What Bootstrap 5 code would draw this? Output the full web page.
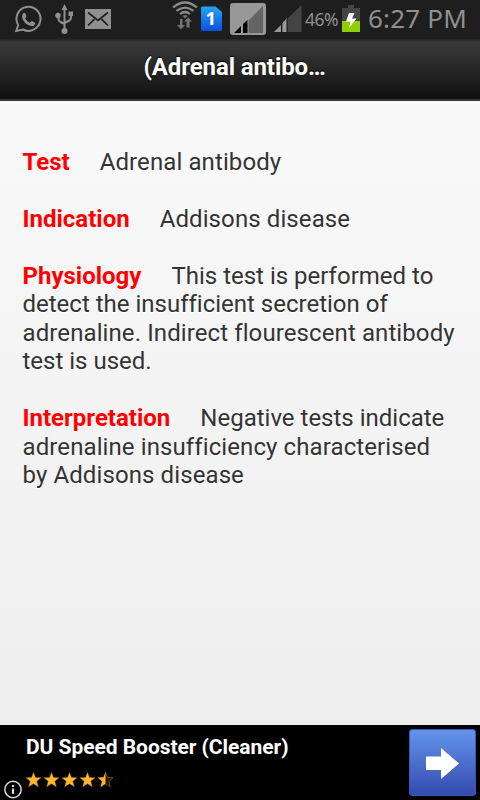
<!DOCTYPE html>
<html lang="en">
<head>
<meta charset="utf-8">
<meta name="viewport" content="width=device-width, initial-scale=1">
<title>Adrenal antibody</title>
<link href="https://cdn.jsdelivr.net/npm/bootstrap@5.3.0/dist/css/bootstrap.min.css" rel="stylesheet">
<style>
body{font-family:Roboto,"Noto Sans",sans-serif;height:800px;overflow:hidden;color:#333}
.status-bar{height:38px;background:#1e1e1e;color:#909090;font-family:"Noto Sans",sans-serif}
.status-bar svg,.ad-banner svg{display:block;flex:none}
.wa{margin-left:14px}.usb{margin-left:12px}.mail{margin-left:10px}
.wifi{margin-left:60px}.sim{margin-left:3px}.sig1{margin-left:6px}.sig2{margin-left:8px}
.pct{font-size:17.5px;letter-spacing:-.5px;width:33px;margin-left:3px;line-height:38px;white-space:nowrap}
.batt{margin-left:4px}
.clock{font-size:26px;letter-spacing:.2px;margin-left:8px;padding-bottom:2px;line-height:36px;white-space:nowrap}
.title-bar{height:63px;background:linear-gradient(#1c1c1c 0,#3a3a3a 4px,#111 60px);border-bottom:2px solid #373535;text-shadow:0 -1px 1px #000}
.title-bar h1{font-size:24px;line-height:28px;width:193px;letter-spacing:-.1px;margin-top:-3px;white-space:nowrap}
.article{height:624px;padding:46.8px 22.5px 0;background:linear-gradient(#f9f9f9,#eee);font-size:24px;line-height:28.5px;text-shadow:0 1px 0 #fff;font-variant-ligatures:none}
.article p{margin:0 0 28.5px;white-space:nowrap}
.article strong{color:#f00;margin-right:30px}
.loose{letter-spacing:.1px}
.ad-banner{height:75px;background:#000;color:#fff}
.ad-title{font-size:21px;line-height:24px;letter-spacing:-.05px;white-space:nowrap}
.ad-copy{padding:10px 0 0 12px;margin-left:-9px}
.info{margin:55px 0 0 3px}
.stars{margin-top:10px}
.go{width:67px;height:67px;margin:4px 4px 0 0;border:1px solid #3159c4;border-radius:3px;background:linear-gradient(#6494ea,#344ab0)}
</style>
<script src="https://cdn.jsdelivr.net/npm/bootstrap@5.3.0/dist/js/bootstrap.bundle.min.js"></script>
</head>
<body class="d-flex flex-column m-0">
<div class="status-bar d-flex align-items-center">
  <svg class="wa" width="28" height="38" viewBox="0 0 28 38" fill="none" stroke="#909090" stroke-width="2"><path d="M2.200 31l2-6A12 12 0 1 1 9 29.500z"/><path d="M9 13.500c1-1 2-.8 2.500.3l1 2.500-1.300 2c1.200 2.200 2.700 3.500 4.700 4.500l1.800-1.800 3.200 1.500c1 .5-.3 3-1.600 3.400-3.500 1-7.500-1.700-9.300-4.300C8 18.800 7.500 15.500 9 13.500z" fill="#909090" stroke="none"/></svg>
  <svg class="usb" width="20" height="38" viewBox="0 0 20 38"><path d="M10.500 9v22M4.500 17v2q0 2 2 3l4 2M17 14v3q0 3-2.500 4l-4 2" fill="none" stroke="#909090" stroke-width="2"/><path d="M10.500 4l3 6h-6zM14.500 11.500h4.500v4.500h-4.500z" fill="#909090"/><circle cx="4" cy="15.500" r="2.700" fill="#909090"/><circle cx="10.500" cy="31" r="3" fill="#909090"/></svg>
  <svg class="mail" width="28" height="38" viewBox="0 0 28 38"><path fill="#909090" d="M1 9h26v20H1z"/><path d="M4 12.500l10 8 10-8M4 25.500l6.500-6.300M24 25.500l-6.500-6.300" fill="none" stroke="#1e1e1e" stroke-width="1.700"/></svg>
  <svg class="wifi" width="26" height="38" viewBox="0 0 26 38"><path d="M1 7.500q12-10 24 0M4.500 10.800q8.500-6.500 17 0M8 14q5-4 10 0" fill="none" stroke="#8c8c8c" stroke-width="2.200"/><path d="M10.500 16q2.500-2 5 0L13 18.500zM8 19h2.500v6H13l-4 4.500L5 25h3zM14.500 27.500v-6H12l4-4 4 4h-2.500v6z" fill="#747474"/></svg>
  <svg class="sim" width="22" height="38" viewBox="0 0 22 38"><defs><linearGradient id="simfill" x2="0" y2="1"><stop stop-color="#26a4f5"/><stop offset="1" stop-color="#0b50dc"/></linearGradient></defs><path d="M1.500 6.500h13l6.500 5.500v18q0 1-1 1H1.500q-1.500 0-1.500-1V8q0-1.500 1.500-1.500z" fill="url(#simfill)"/><text x="4.500" y="25" font-family="Noto Sans,sans-serif" font-size="18.500" font-weight="700" fill="#fff">1</text></svg>
  <svg class="sig1" width="37" height="38" viewBox="0 0 37 38"><rect x="1" y="3" width="36" height="32" rx="3" fill="#989898"/><path d="M34 6v27H19.500V20.500z" fill="#646464"/><path d="M5 33l7-7v7zM14 33v-9l4.500-4V33z" fill="#000"/></svg>
  <svg class="sig2" width="28" height="38" viewBox="0 0 28 38"><path d="M27.500 5v27H0z" fill="#444"/><path d="M0 32l7-7v7zM8.500 32v-9l4.500-5v14z" fill="#989898"/><path d="M7.500 24v8M13 19v13" stroke="#111"/></svg>
  <span class="pct">46%</span>
  <svg class="batt" width="18" height="38" viewBox="0 0 18 38"><path d="M0 8h6V5h6v3h6v13H0z" fill="#444"/><path d="M0 21h18v11H0z" fill="#91d000"/><path d="M7 13h5.500L10 18.500h4.500L7 28l1.500-6.500H4z" fill="#fff"/></svg>
  <span class="clock">6:27 PM</span>
</div>
<header class="title-bar d-flex align-items-center justify-content-center text-white"><h1 class="fw-bold mb-0">(Adrenal antibo…</h1></header>
<main class="article">
  <p><strong>Test</strong><span class="loose">Adrenal antibody</span></p>
  <p><strong>Indication</strong><span class="loose">Addisons disease</span></p>
  <p><strong>Physiology</strong>This test is performed to<br>detect the insufficient secretion of<br><span class="loose">adrenaline. Indirect flourescent antibody</span><br>test is used.</p>
  <p><strong>Interpretation</strong>Negative tests indicate<br><span class="loose">adrenaline insufficiency characterised</span><br><span class="loose">by Addisons disease</span></p>
</main>
<footer class="ad-banner d-flex">
  <svg class="info" width="20" height="20" viewBox="0 0 20 20"><circle cx="10" cy="9.500" r="8.200" fill="#000" stroke="#ddd" stroke-width="1.500"/><path d="M10 5v2M10 8.500v5.500" stroke="#ddd" stroke-width="2.200"/></svg>
  <div class="ad-copy flex-grow-1">
    <div class="ad-title fw-bold">DU Speed Booster (Cleaner)</div>
    <svg class="stars" width="90" height="20" viewBox="0 0 90 20"><defs><path id="star" d="M0-7.500l2 5 5.500.2-4.200 3.600 1.500 5.500L0 3.700l-4.800 3.100 1.500-5.500-4.200-3.600 5.500-.2z"/></defs><g fill="#ffb732" stroke="#9b661a" stroke-width=".5"><use href="#star" x="7.500" y="11"/><use href="#star" x="25.500" y="11"/><use href="#star" x="43.500" y="11"/><use href="#star" x="61.500" y="11"/></g><use href="#star" x="79.500" y="11" fill="#201200" stroke="#8a5a12" stroke-width=".8"/><path d="M79.500 3.500v11.200l-4.800 3.100 1.500-5.500-4.200-3.600 5.500-.2z" fill="#ffb732"/></svg>
  </div>
  <div class="go d-flex align-items-center justify-content-center"><svg width="34" height="34" viewBox="0 0 34 34"><path d="M0 10.500h15V2l18 15.500L15 33v-9H0z" fill="#fff"/></svg></div>
</footer>
</body>
</html>
